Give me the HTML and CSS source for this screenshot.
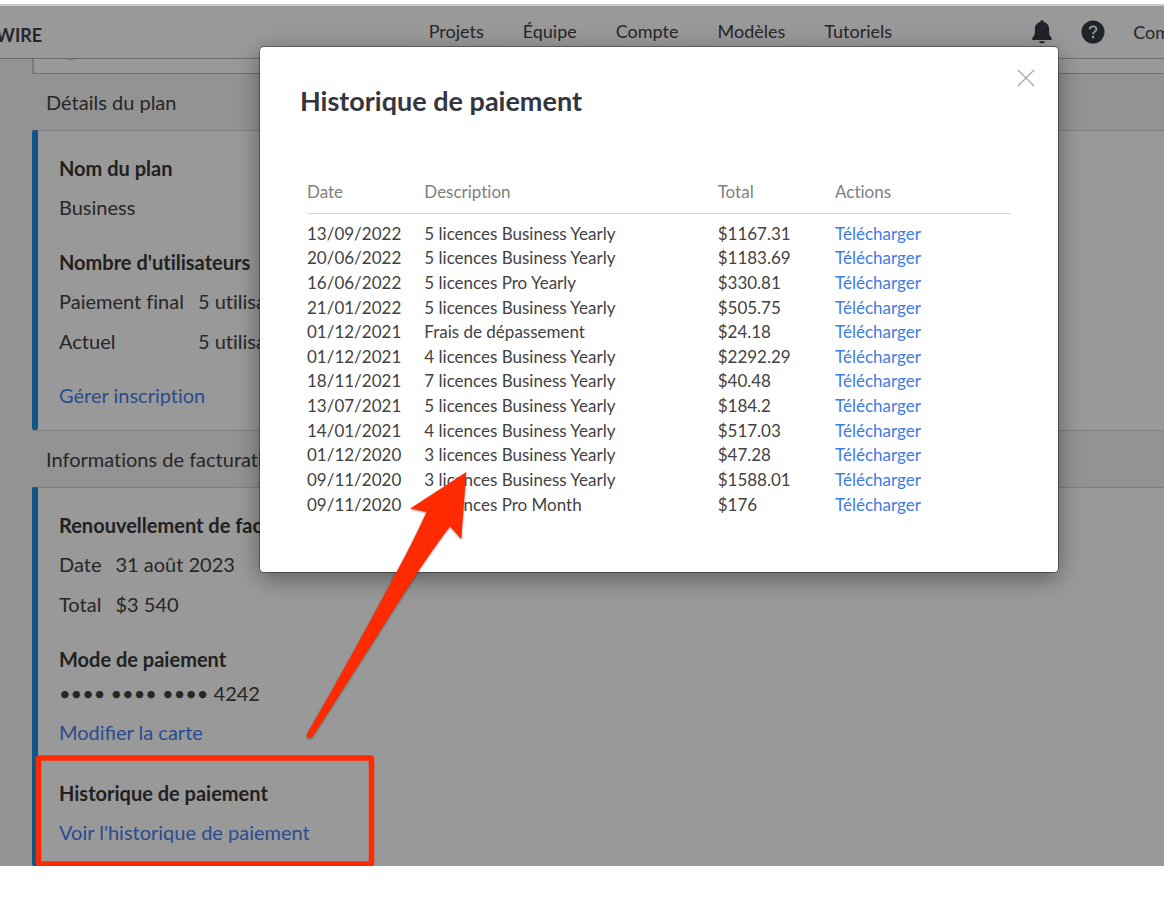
FILE: index.html
```html
<!DOCTYPE html>
<html lang="fr">
<head>
<meta charset="utf-8">
<meta name="viewport" content="width=device-width, initial-scale=1">
<title>Historique de paiement</title>
<link rel="stylesheet" href="styles.css">
</head>
<body>
<div class="app">
  <header class="topbar">
    <span class="brand">WIRE</span>
    <nav class="nav">
      <a href="#">Projets</a>
      <a href="#">Équipe</a>
      <a href="#">Compte</a>
      <a href="#">Modèles</a>
      <a href="#">Tutoriels</a>
    </nav>
    <div class="tools">
      <button class="icon-button" type="button" aria-label="Notifications">
        <svg width="22" height="24" viewBox="0 0 22 24"><path fill="#363c47" d="M11 0c1 0 1.500.7 1.500 1.500v.6c3.300.7 5.600 3.300 5.600 6.900v2.600c0 3 .8 4.600 2.500 6.300.8.900.3 2-.9 2H2.300c-1.200 0-1.700-1.100-.9-2 1.700-1.700 2.500-3.300 2.500-6.300V9c0-3.600 2.300-6.200 5.600-6.900v-.6C9.500.7 10 0 11 0zM8 21.200h6c0 1.200-1.300 2.100-3 2.100s-3-.9-3-2.100z"/></svg>
      </button>
      <button class="icon-button" type="button" aria-label="Aide">
        <svg width="24" height="24" viewBox="0 0 24 24"><circle cx="12" cy="12" r="11.500" fill="#363c47"/><path d="M8.700 9.300c.2-1.800 1.500-2.900 3.400-2.900s3.300 1.100 3.300 2.700c0 1.300-.7 2-1.800 2.700-1.100.7-1.500 1.200-1.500 2.400" fill="none" stroke="#fff" stroke-width="1.800"/><circle cx="12.100" cy="17.100" r="1.300" fill="#fff"/></svg>
      </button>
      <a class="account" href="#">Compte</a>
    </div>
  </header>
  <main class="content">
    <div class="previous"><span class="avatar"></span></div>
    <h2 class="section-title">Détails du plan</h2>
    <section class="panel">
      <div class="group">
        <h3>Nom du plan</h3>
        <p>Business</p>
      </div>
      <div class="group">
        <h3>Nombre d'utilisateurs</h3>
        <dl class="pairs">
          <dt>Paiement final</dt><dd>5 utilisateurs</dd>
          <dt>Actuel</dt><dd>5 utilisateurs</dd>
        </dl>
        <a class="link manage" href="#">Gérer inscription</a>
      </div>
    </section>
    <h2 class="section-title">Informations de facturation</h2>
    <section class="panel billing">
      <div class="group">
        <h3>Renouvellement de facturation</h3>
        <dl class="pairs">
          <dt>Date</dt><dd>31 août 2023</dd>
          <dt>Total</dt><dd>$3 540</dd>
        </dl>
      </div>
      <div class="group">
        <h3>Mode de paiement</h3>
        <p class="card">•••• •••• •••• 4242</p>
        <a class="link edit" href="#">Modifier la carte</a>
      </div>
      <div class="group history">
        <h3>Historique de paiement</h3>
        <a class="link" href="#">Voir l'historique de paiement</a>
      </div>
    </section>
  </main>
  <div class="overlay">
    <div class="modal" role="dialog" aria-modal="true" aria-labelledby="modal-title">
      <button class="close" type="button" aria-label="Fermer">
        <svg width="18" height="18" viewBox="0 0 18 18"><path d="M1 1l16 16M17 1L1 17" stroke="#aaa" stroke-width="1.300" fill="none"/></svg>
      </button>
      <h1 id="modal-title">Historique de paiement</h1>
      <table class="payments">
        <colgroup><col class="c2"><col class="c5"><col class="c2"><col class="c3"></colgroup>
        <thead><tr><th scope="col">Date</th><th scope="col">Description</th><th scope="col">Total</th><th scope="col">Actions</th></tr></thead>
        <tbody>
          <tr><td>13/09/2022</td><td>5 licences Business Yearly</td><td>$1167.31</td><td><a href="#">Télécharger</a></td></tr>
          <tr><td>20/06/2022</td><td>5 licences Business Yearly</td><td>$1183.69</td><td><a href="#">Télécharger</a></td></tr>
          <tr><td>16/06/2022</td><td>5 licences Pro Yearly</td><td>$330.81</td><td><a href="#">Télécharger</a></td></tr>
          <tr><td>21/01/2022</td><td>5 licences Business Yearly</td><td>$505.75</td><td><a href="#">Télécharger</a></td></tr>
          <tr><td>01/12/2021</td><td>Frais de dépassement</td><td>$24.18</td><td><a href="#">Télécharger</a></td></tr>
          <tr><td>01/12/2021</td><td>4 licences Business Yearly</td><td>$2292.29</td><td><a href="#">Télécharger</a></td></tr>
          <tr><td>18/11/2021</td><td>7 licences Business Yearly</td><td>$40.48</td><td><a href="#">Télécharger</a></td></tr>
          <tr><td>13/07/2021</td><td>5 licences Business Yearly</td><td>$184.2</td><td><a href="#">Télécharger</a></td></tr>
          <tr><td>14/01/2021</td><td>4 licences Business Yearly</td><td>$517.03</td><td><a href="#">Télécharger</a></td></tr>
          <tr><td>01/12/2020</td><td>3 licences Business Yearly</td><td>$47.28</td><td><a href="#">Télécharger</a></td></tr>
          <tr><td>09/11/2020</td><td>3 licences Business Yearly</td><td>$1588.01</td><td><a href="#">Télécharger</a></td></tr>
          <tr><td>09/11/2020</td><td>3 licences Pro Month</td><td>$176</td><td><a href="#">Télécharger</a></td></tr>
        </tbody>
      </table>
    </div>
  </div>
  <svg class="annotation" width="480" height="880" viewBox="0 0 480 880" aria-hidden="true">
    <rect x="38.500" y="758" width="333" height="106" rx="1" fill="none" stroke="#ff2a00" stroke-width="5.500" stroke-linejoin="round"/>
    <path class="arrow" fill="#ff2a00" d="M466.300 472L461.300 539L450 526.500Q438 542 417 573Q368 650 313 736Q310 740 307.500 737.500Q306 736 307.500 733Q352 656 396 573Q414 540 426.500 512L410.300 508.500Z"/>
  </svg>
</div>
</body>
</html>
```
FILE: styles.css
```css
* { box-sizing: border-box; }

body {
  margin: 0;
  padding-top: 4px;
  background: #fff;
  color: #424242;
  font-family: Lato, "Liberation Sans", sans-serif;
  font-size: 20px;
  font-variant-ligatures: no-common-ligatures;
  line-height: 40px;
}

h1, h2, h3, p, dl, dd { margin: 0; }
a { color: inherit; text-decoration: none; }
button { padding: 0; border: 0; background: none; cursor: pointer; }
svg { display: block; }

.app {
  position: relative;
  background: #f6f6f6;
}

.topbar {
  display: flex;
  align-items: center;
  height: 55px;
  overflow: hidden;
  border-top: 2px solid #fff;
  border-bottom: 1px solid #b4b4b4;
  background: #fff;
  font-size: 18px;
  white-space: nowrap;
}

.brand {
  flex: 0 0 37%;
  margin: 0 2px 0 -4px;
  padding-top: 6px;
  font-weight: 700;
}

.nav {
  display: flex;
  gap: 39px;
  padding-bottom: 2px;
}

.tools {
  display: flex;
  flex: 1;
  align-items: center;
  gap: 28px;
  justify-content: flex-end;
  margin-right: -32px;
}

.icon-button { flex: none; }

.previous {
  height: 15px;
  overflow: hidden;
  border-bottom: 1px solid #bbb;
  border-left: 2px solid #ccc;
  background: #fff;
}

.avatar {
  display: block;
  width: 30px;
  height: 30px;
  margin: -29px 0 0 22px;
  border-radius: 50%;
  background: #ccc;
}

.content { padding-left: 32px; }

.section-title {
  padding: 8px 14px;
  border-bottom: 1px solid #d4d4d4;
  font-size: 20px;
  font-weight: 400;
}

.panel {
  position: relative;
  display: flex;
  flex-direction: column;
  gap: 16px;
  padding: 18px 27px 15px;
  border-bottom: 1px solid #d4d4d4;
  background: #fff;
}

.panel::before {
  content: "";
  position: absolute;
  inset: -1px auto 0 0;
  width: 6px;
  border-radius: 2px;
  background: #1e8fe0;
}

.billing {
  padding-bottom: 14px;
  border-bottom: 0;
}

h3 {
  color: #383838;
  font-size: 20px;
  font-weight: 700;
  line-height: 38px;
}

.pairs {
  display: grid;
  grid-template-columns: max-content 1fr;
  column-gap: 14px;
}

.link { color: #467fed; }
.manage, .edit { display: inline-block; }
.manage { margin-top: 14px; }
.edit { margin-top: 4px; font-variant-ligatures: normal; }
.history { margin-top: 6px; }
.card { line-height: 30px; }

.overlay {
  position: absolute;
  inset: 0;
  padding: 43px 106px 0 260px;
  background: rgba(0, 0, 0, 0.4);
}

.overlay::before {
  content: "";
  position: absolute;
  inset: 0 0 auto;
  height: 2px;
  background: #c8cac8;
}

.modal {
  position: relative;
  padding: 34px 47px 55px;
  border-radius: 4px;
  background: #fff;
  box-shadow: 0 0 0 1px rgba(0, 0, 0, 0.35), 0 6px 24px rgba(0, 0, 0, 0.4);
}

.close {
  position: absolute;
  top: 22px;
  right: 23px;
}

h1 {
  margin-left: -7px;
  color: #33363f;
  font-size: 27px;
  font-weight: 700;
}

.payments {
  width: 100%;
  margin-top: 51px;
  border-collapse: separate;
  border-spacing: 0;
  table-layout: fixed;
  font-size: 17px;
  line-height: 1.45;
}

.c2 { width: calc(100% / 6); }
.c5 { width: calc(100% * 5 / 12); }
.c3 { width: 25%; }

th, td { padding: 0; text-align: left; }

th {
  padding: 8px 0;
  border-bottom: 1px solid #d8d8d8;
  color: #808080;
  font-weight: 400;
}

tbody tr:first-child td { padding-top: 8px; }
td a { color: #3d7be6; }

.annotation {
  position: absolute;
  top: -4px;
  left: 0;
  pointer-events: none;
}

.arrow { filter: drop-shadow(0 1px 1px rgba(0, 0, 0, 0.4)); }
```
